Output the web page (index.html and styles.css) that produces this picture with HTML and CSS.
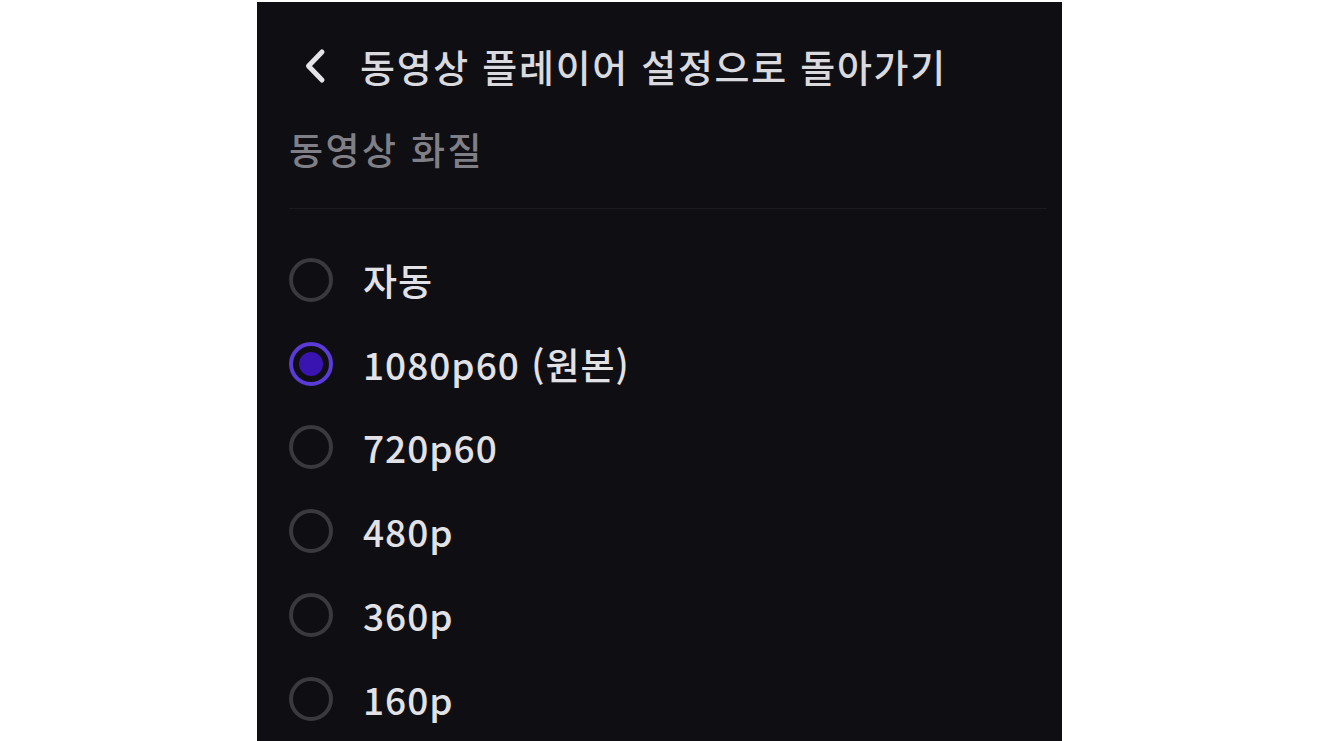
FILE: index.html
```html
<!DOCTYPE html>
<html lang="ko">
<head>
<meta charset="utf-8">
<link rel="stylesheet" href="styles.css">
</head>
<body>
<div class="panel">
  <div class="header">
    <svg class="chev" viewBox="0 0 24 36" width="24" height="36"><path d="M19 4 L5.5 18 L19 32" fill="none" stroke="#e4e4e8" stroke-width="5" stroke-linecap="round" stroke-linejoin="round"/></svg>
    <span class="title">동영상 플레이어 설정으로 돌아가기</span>
  </div>
  <div class="section">동영상 화질</div>
  <div class="divider"></div>
  <ul class="options">
    <li class="opt"><span class="radio"></span><span class="label">자동</span></li>
    <li class="opt"><span class="radio checked"></span><span class="label">1080p60 (원본)</span></li>
    <li class="opt"><span class="radio"></span><span class="label">720p60</span></li>
    <li class="opt"><span class="radio"></span><span class="label">480p</span></li>
    <li class="opt"><span class="radio"></span><span class="label">360p</span></li>
    <li class="opt"><span class="radio"></span><span class="label">160p</span></li>
  </ul>
</div>
</body>
</html>
```
FILE: styles.css
```css
html, body {
  margin: 0;
  padding: 0;
  background: #ffffff;
}
body {
  font-family: "Noto Sans CJK KR", "Noto Sans", sans-serif;
}
.panel {
  margin-left: 257px;
  margin-top: 2px;
  width: 805px;
  height: 739px;
  background: #0f0e13;
  overflow: hidden;
  box-sizing: border-box;
  padding-left: 32px;
}
.header {
  display: flex;
  align-items: center;
  height: 50px;
  margin-top: 39px;
  padding-left: 14px;
}
.chev {
  display: block;
  flex: none;
}
.title {
  margin-left: 33px;
  font-size: 38px;
  letter-spacing: 1.7px;
  color: #d9d9de;
  font-weight: 500;
  line-height: 50px;
}
.section {
  margin-top: 33px;
  font-size: 37px;
  letter-spacing: 2.4px;
  color: #7f7f85;
  line-height: 50px;
  font-weight: 500;
}
.divider {
  margin-top: 34px;
  width: 758px;
  height: 1px;
  background: #1c1b21;
}
.options {
  list-style: none;
  margin: 29px 0 0 0;
  padding: 0;
}
.opt {
  display: flex;
  align-items: center;
  height: 83.8px;
}
.radio {
  box-sizing: border-box;
  width: 44px;
  height: 44px;
  border-radius: 50%;
  border: 4px solid #3a393e;
  flex: none;
  display: flex;
  align-items: center;
  justify-content: center;
}
.radio.checked {
  border-color: #5b3bd8;
}
.radio.checked::after {
  content: "";
  width: 24px;
  height: 24px;
  border-radius: 50%;
  background: #3a14b0;
}
.label {
  margin-left: 30px;
  font-size: 37px;
  letter-spacing: 1px;
  color: #e2e2e6;
  font-weight: 500;
  line-height: 50px;
}
```
